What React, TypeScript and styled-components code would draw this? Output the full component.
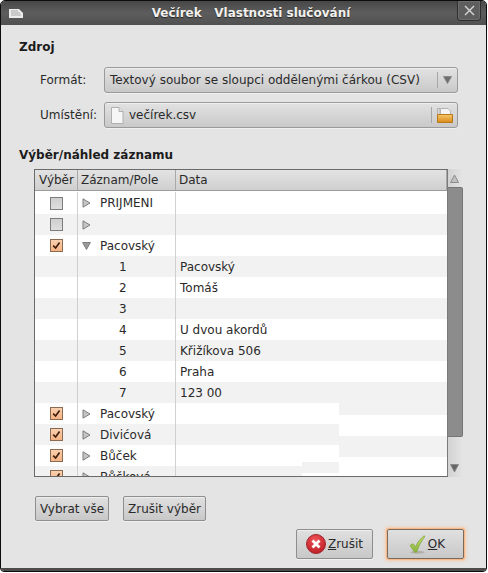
import React from 'react';
import styled, { createGlobalStyle } from 'styled-components';

const GlobalStyle = createGlobalStyle`
  html, body {
    margin: 0;
    padding: 0;
    background: #fff;
  }
  body {
    font-family: 'DejaVu Sans', sans-serif;
    font-size: 12px;
    color: #2a2a2a;
  }
`;

interface RowData {
  checked?: boolean;
  arrow?: 'right' | 'down';
  name?: string;
  num?: string;
  data?: string;
}

const rows: RowData[] = [
  { checked: false, arrow: 'right', name: 'PRIJMENI' },
  { checked: false, arrow: 'right' },
  { checked: true, arrow: 'down', name: 'Pacovský' },
  { num: '1', data: 'Pacovský' },
  { num: '2', data: 'Tomáš' },
  { num: '3' },
  { num: '4', data: 'U dvou akordů' },
  { num: '5', data: 'Křižíkova 506' },
  { num: '6', data: 'Praha' },
  { num: '7', data: '123 00' },
  { checked: true, arrow: 'right', name: 'Pacovský' },
  { checked: true, arrow: 'right', name: 'Divićová' },
  { checked: true, arrow: 'right', name: 'Bůček' },
  { checked: true, arrow: 'right', name: 'Bůčková' },
];

const Expander: React.FC<{ dir: 'right' | 'down' }> = ({ dir }) => (
  <svg width="9" height="10" viewBox="0 0 9 10">
    {dir === 'right' ? (
      <path d="M1 .8 L8 5 L1 9.2 Z" fill="#c4c4c4" stroke="#7f7f7f" />
    ) : (
      <path d="M.6 1.5 L8.4 1.5 L4.5 8.5 Z" fill="#9a9a9a" stroke="#7f7f7f" />
    )}
  </svg>
);

const CheckMark: React.FC = () => (
  <svg width="9" height="9" viewBox="0 0 9 9">
    <path d="M1.2 4.6 L3.6 7 L7.6 1.4" fill="none" stroke="#40200c" strokeWidth="1.7" />
  </svg>
);

const FileIcon: React.FC = () => (
  <svg width="14" height="17" viewBox="0 0 14 17">
    <path d="M1.5 .5 H9 L13 4.5 V16.5 H1.5 Z" fill="#f6f6f6" stroke="#b0b0b0" />
    <path d="M9 .5 V4.5 H13" fill="#e0e0e0" stroke="#b0b0b0" />
  </svg>
);

const FolderIcon: React.FC = () => (
  <svg width="16" height="15" viewBox="0 0 16 15">
    <defs>
      <linearGradient id="folderFill" x1="0" y1="0" x2="0" y2="1">
        <stop offset="0" stopColor="#f6c868" />
        <stop offset="1" stopColor="#d98a1c" />
      </linearGradient>
    </defs>
    <path d="M.5 .5 H3 V8 H.5 Z" fill="#dcdcdc" stroke="#b0b0b0" />
    <path d="M3.5 .5 H11 L13.5 3 V8 H3.5 Z" fill="#f4f4f4" stroke="#b4b4b4" />
    <path d="M.5 6.5 H15.5 V14.5 H.5 Z" fill="url(#folderFill)" stroke="#b8781c" />
  </svg>
);

const CancelIcon: React.FC = () => (
  <svg width="20" height="20" viewBox="0 0 20 20">
    <defs>
      <radialGradient id="cancelFill" cx="0.45" cy="0.3" r="0.8">
        <stop offset="0" stopColor="#f0555a" />
        <stop offset="1" stopColor="#b5181e" />
      </radialGradient>
    </defs>
    <circle cx="10" cy="10" r="9.5" fill="url(#cancelFill)" stroke="#a3252a" />
    <path d="M6.5 6.5 L13.5 13.5 M13.5 6.5 L6.5 13.5" stroke="#fff" strokeWidth="2.8" />
  </svg>
);

const OkIcon: React.FC = () => (
  <svg width="17" height="19" viewBox="0 0 18 21">
    <defs>
      <linearGradient id="okFill" x1="0" y1="0" x2="0" y2="1">
        <stop offset="0" stopColor="#c4e070" />
        <stop offset="1" stopColor="#88b43a" />
      </linearGradient>
    </defs>
    <ellipse cx="9" cy="19" rx="8" ry="1.6" fill="#b0b0a8" />
    <path d="M.7 11.5 L4 9.6 L7 13 C9 8 12 4 16.5 .8 L17 2 C13 7 10.5 12 8 19 L6 19 Z" fill="url(#okFill)" stroke="#7fa23a" strokeWidth=".8" />
  </svg>
);

const App: React.FC = () => (
  <>
    <GlobalStyle />
    <Frame>
      <TitleBar>
        <TitleIcon>
          <svg width="14" height="9" viewBox="0 0 14 9">
            <path d="M0 0 H10 L14 4 V9 H0 Z" fill="#ececec" />
            <path d="M2 2 H9 M2 4 H11 M2 6 H12" stroke="#a8a8a8" />
          </svg>
        </TitleIcon>
        <TitleText>Večírek   Vlastnosti slučování</TitleText>
        <CloseButton>
          <svg width="11" height="11" viewBox="0 0 11 11">
            <path d="M1 1 L10 10 M10 1 L1 10" stroke="#d8d8d8" strokeWidth="1.4" />
          </svg>
        </CloseButton>
      </TitleBar>

      <Body>
        <SectionTitle>Zdroj</SectionTitle>
        <FieldList>
          <FieldRow>
            <FieldLabel>Formát:</FieldLabel>
            <Combo>
              <ComboText>Textový soubor se sloupci oddělenými čárkou (CSV)</ComboText>
              <ComboSide $width={20}>
                <svg width="9" height="8" viewBox="0 0 9 8">
                  <path d="M.5 .5 H8.5 L4.5 7.5 Z" fill="#6e6e6e" stroke="#8a8a8a" />
                </svg>
              </ComboSide>
            </Combo>
          </FieldRow>
          <FieldRow>
            <FieldLabel>Umístění:</FieldLabel>
            <Combo>
              <FileSlot>
                <FileIcon />
              </FileSlot>
              <ComboText>večírek.csv</ComboText>
              <ComboSide $width={26}>
                <FolderIcon />
              </ComboSide>
            </Combo>
          </FieldRow>
        </FieldList>

        <PreviewTitle>Výběr/náhled záznamu</PreviewTitle>
        <TableFrame>
          <TableMain>
            <HeaderRow>
              <HeaderCell $width={43} $pad={4}>Výběr</HeaderCell>
              <HeaderCell $width={98} $pad={3}>Záznam/Pole</HeaderCell>
              <HeaderCell $pad={3}>Data</HeaderCell>
            </HeaderRow>
            <Viewport>
              {rows.map((row, i) => (
                <Row key={i} $alt={i % 2 === 1} $first={i === 0}>
                  <CheckCell>
                    {row.checked !== undefined && (
                      <CheckBox $checked={row.checked}>{row.checked && <CheckMark />}</CheckBox>
                    )}
                  </CheckCell>
                  <TreeCell>
                    {row.arrow && (
                      <ArrowSlot>
                        <Expander dir={row.arrow} />
                      </ArrowSlot>
                    )}
                    {row.name && <span>{row.name}</span>}
                    {row.num && <NumText>{row.num}</NumText>}
                  </TreeCell>
                  <DataCell>{row.data}</DataCell>
                </Row>
              ))}
              <RepaintRight>
                <RepaintBand $height={12} $color="#f2f2f2" />
                <RepaintBand $height={21} $color="#ffffff" />
                <RepaintBand $height={21} $color="#f2f2f2" />
                <RepaintBand $height={19} $color="#ffffff" />
              </RepaintRight>
              <RepaintMiddle>
                <RepaintBand $height={11} $color="#f2f2f2" />
                <RepaintBand $height={3} $color="#ffffff" />
              </RepaintMiddle>
            </Viewport>
          </TableMain>
          <ScrollBar>
            <ScrollEnd>
              <svg width="9" height="9" viewBox="0 0 9 9">
                <path d="M4.5 1 L8.5 8.5 H.5 Z" fill="#c0c0c0" stroke="#8c8c8c" />
              </svg>
            </ScrollEnd>
            <ScrollThumb />
            <ScrollTrough />
            <ScrollEnd>
              <svg width="9" height="9" viewBox="0 0 9 9">
                <path d="M.5 .5 H8.5 L4.5 8 Z" fill="#666" stroke="#8a8a8a" />
              </svg>
            </ScrollEnd>
          </ScrollBar>
        </TableFrame>

        <SelectionRow>
          <PushButton $width={74} $height={25}>Vybrat vše</PushButton>
          <PushButton $width={83} $height={25}>Zrušit výběr</PushButton>
        </SelectionRow>

        <ActionRow>
          <PushButton $width={77} $height={30}>
            <CancelIcon />
            <span>
              <u>Z</u>rušit
            </span>
          </PushButton>
          <PushButton $width={77} $height={30} $focused>
            <OkIcon />
            <span>
              <u>O</u>K
            </span>
          </PushButton>
        </ActionRow>
      </Body>
    </Frame>
  </>
);

export default App;

const Frame = styled.div`
  box-sizing: border-box;
  width: 487px;
  height: 572px;
  display: flex;
  flex-direction: column;
  overflow: hidden;
  background: #e4e4e4;
  border: 1px solid #0c0c0c;
  border-radius: 5px 5px 4px 4px;
`;

const TitleBar = styled.div`
  flex: none;
  height: 24px;
  display: flex;
  align-items: center;
  position: relative;
  background: linear-gradient(#474747, #5d5d5d 50%, #505050);
`;

const TitleIcon = styled.div`
  display: flex;
  margin-left: 8px;
`;

const TitleText = styled.div`
  position: absolute;
  left: 15px;
  right: 0;
  top: 4px;
  text-align: center;
  white-space: pre;
  font-size: 12px;
  font-weight: bold;
  line-height: 17px;
  color: #f2f1ed;
  text-shadow: 0 1px 1px #222;
`;

const CloseButton = styled.div`
  position: absolute;
  right: 5px;
  top: -1px;
  box-sizing: border-box;
  width: 24px;
  height: 21px;
  display: flex;
  align-items: center;
  justify-content: center;
  border: 1px solid #2e2e2e;
  border-radius: 0 0 3px 3px;
  background: #5e5e5e;
  box-shadow: inset 0 0 0 1px #6c6c6c;
`;

const Body = styled.div`
  flex: 1;
  display: flex;
  flex-direction: column;
  padding: 14px 22px 0 18px;
  border-bottom: 3px solid #4c4c4c;
`;

const SectionTitle = styled.div`
  font-weight: bold;
  line-height: 16px;
  color: #1c1c1c;
`;

const FieldList = styled.div`
  display: flex;
  flex-direction: column;
  gap: 9px;
  margin-top: 12px;
  padding-left: 21px;
`;

const FieldRow = styled.div`
  display: flex;
  align-items: center;
`;

const FieldLabel = styled.div`
  width: 64px;
`;

const Combo = styled.div`
  box-sizing: border-box;
  width: 354px;
  height: 26px;
  display: flex;
  align-items: center;
  padding-left: 5px;
  border: 1px solid #9a9a9a;
  border-radius: 3px;
  background: linear-gradient(#e2e2e2, #c9c9c9);
  box-shadow: inset 0 1px 0 #efefef, 0 1px 0 #f0f0f0;
`;

const ComboText = styled.div`
  flex: 1;
`;

const FileSlot = styled.div`
  display: flex;
  margin-right: 5px;
`;

const ComboSide = styled.div<{ $width: number }>`
  box-sizing: border-box;
  width: ${(p) => p.$width}px;
  height: 16px;
  display: flex;
  align-items: center;
  justify-content: center;
  border-left: 1px solid #a8a8a8;
`;

const PreviewTitle = styled(SectionTitle)`
  margin-top: 19px;
`;

const TableFrame = styled.div`
  display: flex;
  width: 429px;
  height: 308px;
  margin: 6px 0 0 15px;
`;

const TableMain = styled.div`
  box-sizing: border-box;
  width: 414px;
  display: flex;
  flex-direction: column;
  border: 1px solid #6a6a6a;
  border-right-color: #7a7a7a;
  background: #fff;
`;

const HeaderRow = styled.div`
  flex: none;
  height: 21px;
  display: flex;
  box-sizing: border-box;
  border-bottom: 1px solid #9c9c9c;
  background: linear-gradient(#e3e3e3, #cfcfcf);
`;

const HeaderCell = styled.div<{ $width?: number; $pad: number }>`
  box-sizing: border-box;
  ${(p) => (p.$width ? `width: ${p.$width}px;` : 'flex: 1;')}
  padding-left: ${(p) => p.$pad}px;
  line-height: 20px;
  border-right: 1px solid #a8a8a8;
`;

const Viewport = styled.div`
  flex: 1;
  overflow: hidden;
  position: relative;
`;

const Row = styled.div<{ $alt: boolean; $first: boolean }>`
  box-sizing: border-box;
  height: ${(p) => (p.$first ? 23 : 21)}px;
  padding-top: ${(p) => (p.$first ? 1 : 0)}px;
  display: flex;
  background: ${(p) => (p.$alt ? '#f2f2f2' : '#fff')};
`;

const CheckCell = styled.div`
  box-sizing: border-box;
  width: 43px;
  display: flex;
  align-items: center;
  justify-content: center;
  border-right: 1px solid #d0d0d0;
  padding-left: 1px;
`;

const CheckBox = styled.div<{ $checked: boolean }>`
  box-sizing: border-box;
  width: 13px;
  height: 13px;
  display: flex;
  align-items: center;
  justify-content: center;
  border: 1px solid ${(p) => (p.$checked ? '#8c6a50' : '#7c7c7c')};
  background: ${(p) =>
    p.$checked ? 'linear-gradient(#f9d0b0, #f6b384)' : 'linear-gradient(#cfcfcf, #dedede)'};
`;

const TreeCell = styled.div`
  box-sizing: border-box;
  width: 98px;
  display: flex;
  align-items: center;
  padding-left: 4px;
  border-right: 1px solid #d0d0d0;
`;

const ArrowSlot = styled.div`
  display: flex;
  width: 18px;
`;

const NumText = styled.span`
  margin-left: 37px;
`;

const DataCell = styled.div`
  flex: 1;
  display: flex;
  align-items: center;
  padding-left: 4px;
`;

const RepaintRight = styled.div`
  position: absolute;
  left: 304px;
  right: 0;
  top: 212px;
`;

const RepaintMiddle = styled.div`
  position: absolute;
  left: 267px;
  width: 37px;
  top: 271px;
`;

const RepaintBand = styled.div<{ $height: number; $color: string }>`
  height: ${(p) => p.$height}px;
  background: ${(p) => p.$color};
`;

const ScrollBar = styled.div`
  flex: 1;
  display: flex;
  flex-direction: column;
`;

const ScrollEnd = styled.div`
  flex: none;
  height: 18px;
  display: flex;
  align-items: center;
  justify-content: center;
  padding-right: 2px;
  background: linear-gradient(90deg, #d2d2d2, #e4e4e4);
`;

const ScrollThumb = styled.div`
  flex: none;
  height: 250px;
  box-sizing: border-box;
  border: 1px solid #767676;
  border-left: 0;
  border-radius: 0 2px 2px 0;
  background: #8c8c8c;
`;

const ScrollTrough = styled.div`
  flex: 1;
  background: linear-gradient(90deg, #d2d2d2, #e4e4e4);
`;

const SelectionRow = styled.div`
  display: flex;
  gap: 14px;
  margin: 19px 0 0 16px;
`;

const ActionRow = styled.div`
  display: flex;
  justify-content: flex-end;
  gap: 14px;
  margin-top: 8px;
`;

const PushButton = styled.div<{ $width: number; $height: number; $focused?: boolean }>`
  box-sizing: border-box;
  width: ${(p) => p.$width}px;
  height: ${(p) => p.$height}px;
  display: flex;
  align-items: center;
  justify-content: center;
  gap: 2px;
  padding-left: ${(p) => (p.$focused ? 3 : 0)}px;
  border: 1px solid ${(p) => (p.$focused ? '#7a6a5a' : '#8e8e8e')};
  border-radius: 2px;
  background: linear-gradient(#e0e0e0, #c8c8c8);
  box-shadow: ${(p) =>
    p.$focused ? '0 0 0 1px #f6b88a, 0 0 3px 2px #f8c9a4' : 'inset 0 1px 0 #eeeeee, 0 1px 0 #f0f0f0'};
`;
